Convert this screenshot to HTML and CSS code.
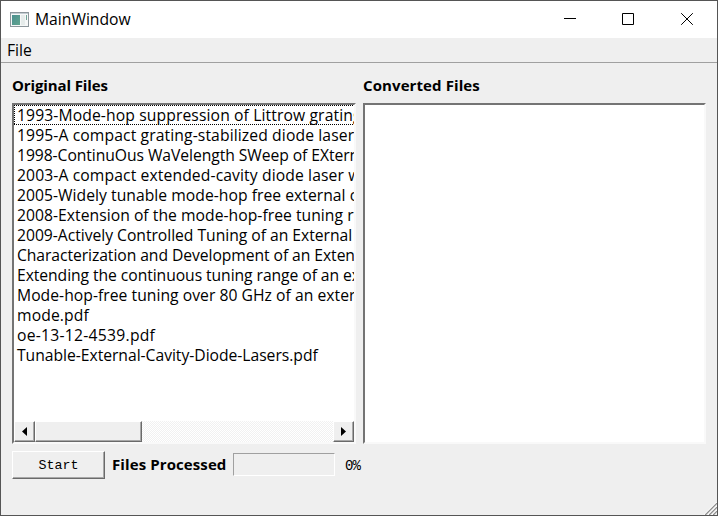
FILE: index.html
```html
<!DOCTYPE html>
<html lang="en">
<head>
<meta charset="utf-8">
<title>MainWindow</title>
<link rel="stylesheet" href="styles.css">
</head>
<body>
<div class="window">
  <header class="titlebar">
    <svg class="app-icon" width="19" height="16" viewBox="0 0 19 16">
      <defs><linearGradient id="pane" x1="0" y1="0" x2="1" y2="1"><stop offset="0" stop-color="#4a8f8f"/><stop offset="1" stop-color="#62a58f"/></linearGradient></defs>
      <rect x=".5" y=".5" width="18" height="14" fill="#f6f8f8" stroke="#8d979c"/>
      <rect x="1" y="1" width="17" height="1" fill="#c3cdd2"/>
      <rect x="2" y="3" width="8" height="10" fill="url(#pane)"/>
      <rect x="11" y="3" width="4" height="10" fill="#e6eceb"/>
      <rect x="16" y="3" width="1" height="5" fill="#6fa596"/>
    </svg>
    <span class="title">MainWindow</span>
    <div class="controls">
      <svg width="12" height="12" viewBox="0 0 12 12"><path d="M0 5.5H12"/></svg>
      <svg width="12" height="12" viewBox="0 0 12 12"><path d="M.5.5H11.5V11.5H.5Z"/></svg>
      <svg width="12" height="12" viewBox="0 0 12 12"><path d="M.2.2 11.8 11.8M11.8.2.2 11.8"/></svg>
    </div>
  </header>
  <nav class="menubar"><span>File</span></nav>
  <main class="content">
    <div class="panels">
      <section class="panel">
        <h2>Original Files</h2>
        <div class="list">
          <ul>
            <li class="current snug">1993-Mode-hop suppression of Littrow grating</li>
            <li class="snug">1995-A compact grating-stabilized diode laser</li>
            <li class="tightest">1998-ContinuOus WaVelength SWeep of EXtern</li>
            <li class="snug">2003-A compact extended-cavity diode laser w</li>
            <li class="tight">2005-Widely tunable mode-hop free external c</li>
            <li class="tight">2008-Extension of the mode-hop-free tuning r</li>
            <li class="tighter">2009-Actively Controlled Tuning of an External</li>
            <li class="tightest">Characterization and Development of an Exten</li>
            <li class="tightest">Extending the continuous tuning range of an ex</li>
            <li class="tight">Mode-hop-free tuning over 80 GHz of an exter</li>
            <li>mode.pdf</li>
            <li class="loose">oe-13-12-4539.pdf</li>
            <li class="tighter">Tunable-External-Cavity-Diode-Lasers.pdf</li>
          </ul>
          <div class="scrollbar">
            <div class="raised arrow"><svg width="5" height="9" viewBox="0 0 5 9"><path d="M5 0V9L0 4.5Z"/></svg></div>
            <div class="raised thumb"></div>
            <div class="track"></div>
            <div class="raised arrow"><svg width="5" height="9" viewBox="0 0 5 9"><path d="M0 0V9L5 4.5Z"/></svg></div>
          </div>
        </div>
      </section>
      <section class="panel">
        <h2 class="wide">Converted Files</h2>
        <div class="list"></div>
      </section>
    </div>
    <div class="actions">
      <button class="raised start" type="button">Start</button>
      <strong>Files Processed</strong>
      <div class="progress"></div>
      <span class="percent">0%</span>
    </div>
  </main>
  <svg class="grip" width="13" height="13" viewBox="0 0 13 13">
    <path class="light" d="M0 13 13 0M4 13 13 4M8 13 13 8"/>
    <path d="M1.2 13 13 1.2M5.2 13 13 5.2M9.2 13 13 9.2"/>
  </svg>
</div>
</body>
</html>
```
FILE: styles.css
```css
* { box-sizing: border-box; }

body {
  margin: 0;
  font: 15.7px/20px "Open Sans", "Noto Sans", sans-serif;
  color: #000;
}

.window {
  position: relative;
  display: flex;
  flex-direction: column;
  width: 718px;
  height: 516px;
  border: 1px solid #555;
  background: #efefef;
  overflow: hidden;
}

.titlebar {
  display: flex;
  align-items: center;
  height: 37px;
  padding: 0 24px 1px 9px;
  background: #fff;
}

.app-icon { margin-top: 1px; }

.title { margin-left: 6px; }

.controls {
  display: flex;
  gap: 46px;
  margin-left: auto;
}

.controls svg { fill: none; stroke: #000; }

.controls svg:last-child { margin-left: 1px; }

.menubar {
  height: 25px;
  padding: 2px 6px;
  border-bottom: 1px solid #a0a0a0;
}

.content { padding: 12px 11px; }

.panels {
  display: grid;
  grid-template-columns: 344px 343px;
  gap: 7px;
}

h2, strong {
  margin: 0;
  font-size: 15px;
  font-weight: 700;
  line-height: 20px;
  letter-spacing: -0.12px;
  white-space: nowrap;
}

h2.wide, strong { letter-spacing: 0.1px; }

.list {
  display: flex;
  flex-direction: column;
  justify-content: space-between;
  height: 341px;
  margin-top: 8px;
  border: 2px solid;
  border-color: #747474 #f9f9f9 #f9f9f9 #747474;
  background: #fff;
}

ul {
  margin: 0;
  padding: 0;
  list-style: none;
}

li {
  height: 20px;
  padding-left: 3px;
  overflow: hidden;
  white-space: nowrap;
  letter-spacing: 0.12px;
}

.loose { letter-spacing: 0.26px; }
.snug { letter-spacing: 0.11px; }
.tight { letter-spacing: 0.03px; }
.tighter { letter-spacing: -0.03px; }
.tightest { letter-spacing: -0.07px; }

.current {
  background:
    repeating-linear-gradient(90deg, #000 0 1px, #fff 1px 2px) top / 100% 1px no-repeat,
    repeating-linear-gradient(90deg, #000 0 1px, #fff 1px 2px) bottom / 100% 1px no-repeat,
    repeating-linear-gradient(#000 0 1px, #fff 1px 2px) left / 1px 100% no-repeat;
}

.raised {
  border: 1px solid;
  border-color: #fff #6a6a6a #6a6a6a #fff;
  box-shadow: inset -1px -1px #a8a8a8;
  background: #efefef;
}

.scrollbar { display: flex; height: 21px; }

.arrow {
  display: grid;
  place-items: center;
  width: 21px;
  padding-right: 1px;
  padding-bottom: 1px;
}

.thumb { width: 107px; }

.track {
  flex: 1;
  background: repeating-conic-gradient(#fff 0 25%, #f1f1f1 0 50%) 0 0 / 2px 2px;
}

.actions {
  display: flex;
  align-items: center;
  height: 28px;
  margin-top: 7px;
}

.start {
  width: 93px;
  height: 28px;
  margin-right: 7px;
  padding: 0;
  font: 13.3px "Liberation Mono", monospace;
}

strong { width: 114px; margin-bottom: 2px; }

.progress {
  width: 102px;
  height: 23px;
  margin: 0 0 1px 7px;
  border: 1px solid;
  border-color: #a0a0a0 #fff #fff #a0a0a0;
}

.percent {
  margin: 1px 0 0 10px;
  font: 14px "Liberation Mono", monospace;
  letter-spacing: -0.8px;
}

.grip {
  position: absolute;
  right: 0;
  bottom: 0;
  fill: none;
  stroke: #8c8c8c;
  stroke-width: 1.2;
}

.grip .light { stroke: #fff; }
```
